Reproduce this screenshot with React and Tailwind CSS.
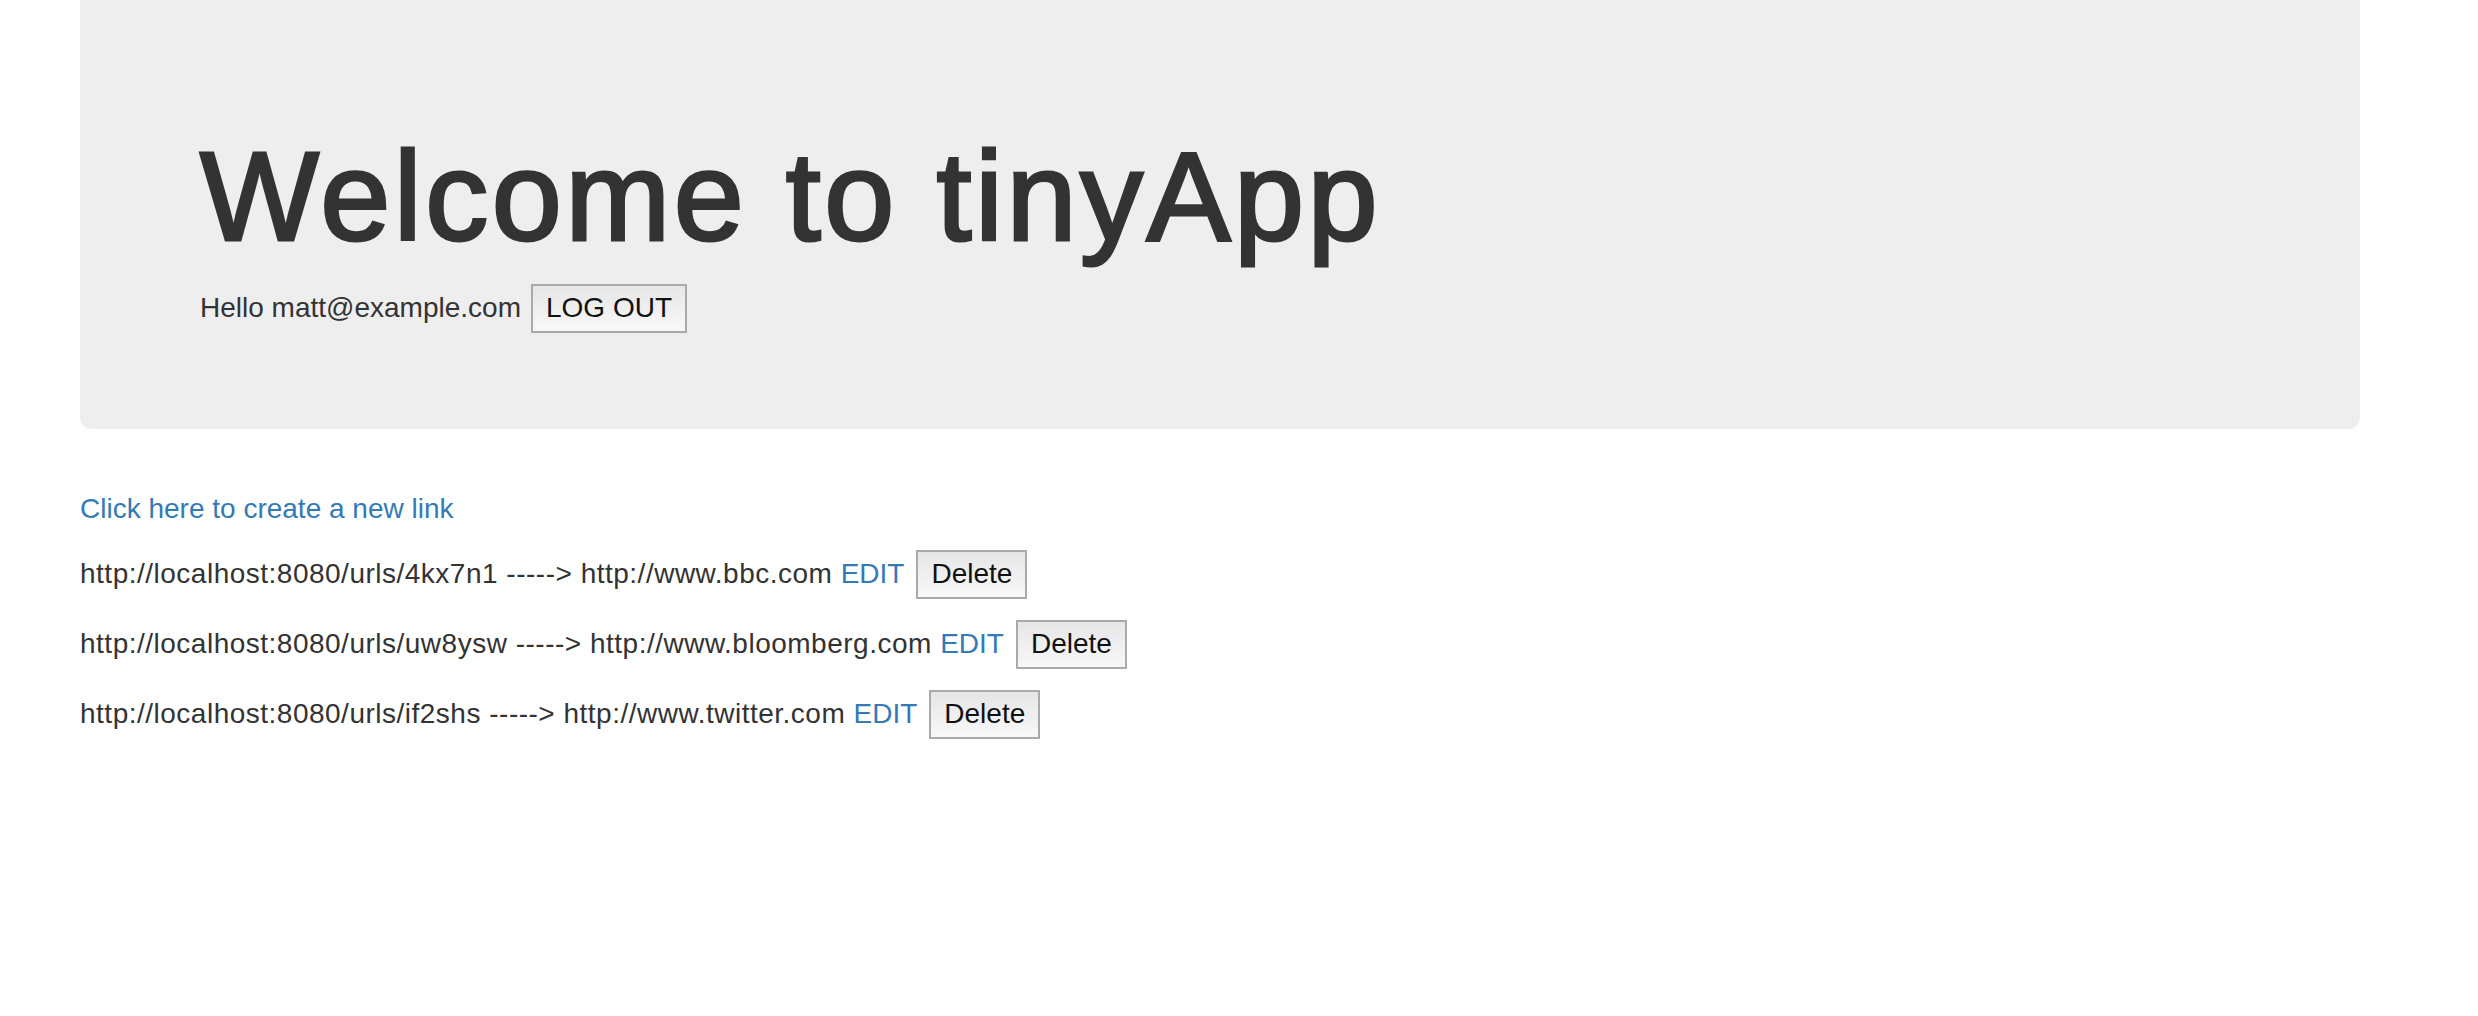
const urls = [
  { short: "4kx7n1", long: "http://www.bbc.com" },
  { short: "uw8ysw", long: "http://www.bloomberg.com" },
  { short: "if2shs", long: "http://www.twitter.com" },
];

function Button({ children }) {
  return (
    <button className="h-[49px] px-[13px] border-2 border-[#aaaaaa] bg-gradient-to-b from-[#e6e6e6] to-[#f8f8f8] text-[28px] leading-none text-[#111]">
      {children}
    </button>
  );
}

export default function App() {
  return (
    <div className="min-h-screen bg-white font-['Liberation_Sans',Arial,sans-serif] text-[28px] leading-[40px] text-[#333]">
      <div className="ml-[80px] w-[2280px] rounded-b-[12px] bg-[#eeeeee] px-[120px] pt-[128px] pb-[96px]">
        <h1 className="text-[126px] leading-[1.1] tracking-[3.5px] font-normal text-[#333] [-webkit-text-stroke:3px_#333]">Welcome to tinyApp</h1>
        <div className="mt-[17px] flex items-center">
          <span>Hello matt@example.com</span>
          <span className="ml-[10px]">
            <Button>LOG OUT</Button>
          </span>
        </div>
      </div>

      <div className="ml-[80px] pt-[60px]">
        <a href="#" className="block text-[#337ab7]">Click here to create a new link</a>
        <div className="mt-[21px] flex flex-col gap-[21px]">
          {urls.map((u) => (
            <div key={u.short} className="flex items-center h-[49px]">
              <span className="tracking-[0.5px]">
                http://localhost:8080/urls/{u.short} -----&gt; {u.long}{" "}
                <a href="#" className="text-[#337ab7] tracking-normal">EDIT</a>
              </span>
              <span className="ml-[12px]">
                <Button>Delete</Button>
              </span>
            </div>
          ))}
        </div>
      </div>
    </div>
  );
}
